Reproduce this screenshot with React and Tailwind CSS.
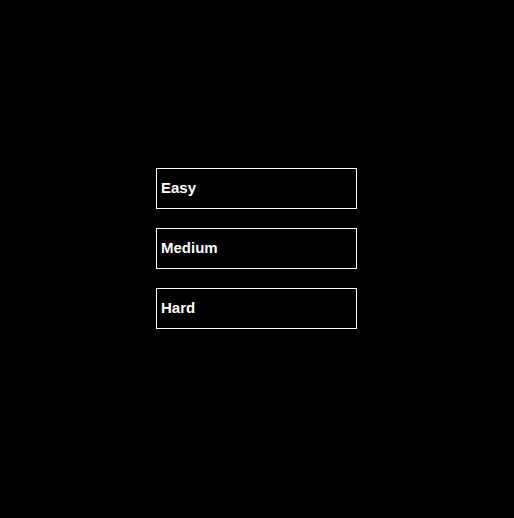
import React from 'react';

const levels = ['Easy', 'Medium', 'Hard'];

export default function App() {
  return (
    <div className="min-h-[518px] w-full bg-black flex flex-col items-start pl-[156px] pt-[168px] gap-[19px] font-['Liberation_Sans',Arial,sans-serif]">
      {levels.map((l) => (
        <button
          key={l}
          className="w-[201px] h-[41px] border border-white bg-black text-white text-left pl-[4px] font-bold text-[15px] cursor-pointer"
        >
          {l}
        </button>
      ))}
    </div>
  );
}
